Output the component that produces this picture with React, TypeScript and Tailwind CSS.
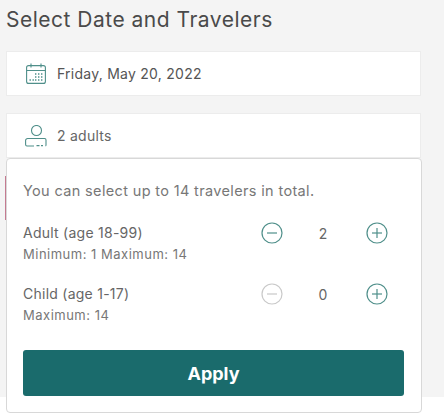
const font = "font-['Inter','Liberation_Sans',sans-serif]";

const CalendarIcon = () => (
  <svg width="20" height="21" viewBox="0 0 20 21" fill="none" stroke="#4f8f8a" strokeWidth="1.1">
    <rect x="0.6" y="2.6" width="18.8" height="17.8" rx="2" />
    <path d="M0.6 7.5h18.8M5 0.5v4M15 0.5v4" />
    <path d="M9 11h1.4M12 11h1.4M15 11h1.4M9 14h1.4M12 14h1.4M15 14h1.4M3.5 17h1.4M6.5 17h1.4M9 17h1.4M12 17h1.4M15 17h1.4" strokeWidth="1.3" />
  </svg>
);

const PersonIcon = () => (
  <svg width="22" height="22" viewBox="0 0 22 22" fill="none" stroke="#4f8f8a" strokeWidth="1.1">
    <circle cx="11.5" cy="5.5" r="5" />
    <path d="M9 21H2a1.4 1.4 0 0 1-1.4-1.4V15.5a2 2 0 0 1 2-2h17a1.4 1.4 0 0 1 1.4 1.4v5a1.4 1.4 0 0 1-.5 1.1" />
    <path d="M11.5 20.6h3M16 20.6h2" />
  </svg>
);

const RoundButton = ({ plus, disabled }: { plus?: boolean; disabled?: boolean }) => (
  <svg width="22" height="22" viewBox="0 0 22 22" fill="none" stroke={disabled ? "#c9c9c9" : "#4f8f8a"} strokeWidth="1.2">
    <circle cx="11" cy="11" r="10" />
    <path d="M6 11h10" />
    {plus && <path d="M11 6v10" />}
  </svg>
);

const Counter = ({ label, hint, value, minusDisabled }: { label: string; hint: string; value: number; minusDisabled?: boolean }) => (
  <div className="flex items-start justify-between">
    <div>
      <div className="text-[14px] leading-[20px] tracking-[0.25px] text-[#666]">{label}</div>
      <div className="text-[13px] leading-[20px] mt-[1px] tracking-[0.5px] text-[#777]">{hint}</div>
    </div>
    <div className="flex items-center mr-[16px] mt-[-1px]">
      <RoundButton disabled={minusDisabled} />
      <span className="w-[83px] pr-[3px] text-center text-[14px] text-[#666]">{value}</span>
      <RoundButton plus />
    </div>
  </div>
);

export default function App() {
  return (
    <div className={`${font} relative w-[444px] h-[420px] bg-white overflow-hidden`}>
      <div className="h-[397px] bg-[#f4f4f4] px-[6px]">
        <h1 className="pt-[6px] text-[21px] leading-[27px] text-[#4a4a4a] tracking-[0.5px]">Select Date and Travelers</h1>
        <div className="mt-[18px] w-[415px] h-[45px] bg-white border border-[#ececec] flex items-center gap-[11px] pl-[19px]">
          <CalendarIcon />
          <span className="text-[14px] tracking-[0.25px] text-[#555]">Friday, May 20, 2022</span>
        </div>
        <div className="mt-[17px] w-[415px] h-[45px] bg-white border border-[#ececec] flex items-center gap-[10px] pl-[18px]">
          <PersonIcon />
          <span className="text-[14px] tracking-[0.25px] text-[#666]">2 adults</span>
        </div>
      </div>
      <div className="absolute left-[5px] top-[176px] w-[1px] h-[44px] bg-[#c47a90]" />
      <div className="absolute left-[6px] top-[158px] w-[416px] h-[255px] bg-white border border-[#d8d8d8] rounded-[4px] pl-[16px] pr-[17px] pt-[23px]">
        <p className="text-[14.5px] leading-[18px] tracking-[0.35px] text-[#777]">You can select up to 14 travelers in total.</p>
        <div className="mt-[23px] flex flex-col gap-[20px]">
          <Counter label="Adult (age 18-99)" hint="Minimum: 1 Maximum: 14" value={2} />
          <Counter label="Child (age 1-17)" hint="Maximum: 14" value={0} minusDisabled />
        </div>
        <button className="mt-[25px] w-[381px] h-[46px] rounded-[3px] bg-[#1a6b6c] text-white text-[18px] font-bold">Apply</button>
      </div>
    </div>
  );
}
